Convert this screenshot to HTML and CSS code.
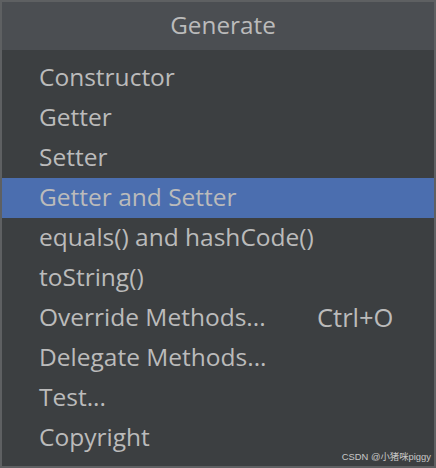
FILE: index.html
```html
<!DOCTYPE html>
<html>
<head>
<meta charset="utf-8">
<link rel="stylesheet" href="styles.css">
</head>
<body>
<div class="popup">
  <div class="header">Generate</div>
  <ul class="list">
    <li class="item">Constructor</li>
    <li class="item">Getter</li>
    <li class="item">Setter</li>
    <li class="item selected">Getter and Setter</li>
    <li class="item">equals() and hashCode()</li>
    <li class="item">toString()</li>
    <li class="item"><span class="label">Override Methods...</span><span class="shortcut">Ctrl+O</span></li>
    <li class="item">Delegate Methods...</li>
    <li class="item">Test...</li>
    <li class="item">Copyright</li>
  </ul>
  <div class="watermark">CSDN @小猪咪piggy</div>
</div>
</body>
</html>
```
FILE: styles.css
```css
html, body {
  margin: 0;
  padding: 0;
  background: #3c3f41;
}
.popup {
  position: relative;
  width: 436px;
  height: 468px;
  box-sizing: border-box;
  border: 2px solid #5e6062;
  background: #3c3f41;
  font-family: "Open Sans", "Noto Sans", sans-serif;
  color: #bbbbbb;
}
.header {
  height: 48px;
  box-sizing: border-box;
  padding: 0 0 3px 10px;
  background: #4b4e52;
  display: flex;
  align-items: center;
  justify-content: center;
  font-size: 24.3px;
  color: #bbbbbb;
}
.list {
  list-style: none;
  margin: 0;
  padding: 8px 0 0 0;
}
.item {
  height: 40px;
  box-sizing: border-box;
  padding: 0 0 3px 37px;
  display: flex;
  align-items: center;
  font-size: 24.5px;
}
.item.selected {
  background: #4b6eaf;
}
.label {
  width: 278px;
}
.shortcut {
  font-size: 25.5px;
}
.watermark {
  position: absolute;
  right: 3px;
  bottom: 3px;
  font-family: "Liberation Sans", "Noto Sans CJK SC", sans-serif;
  font-size: 9.4px;
  color: #c8c8c8;
}
```
